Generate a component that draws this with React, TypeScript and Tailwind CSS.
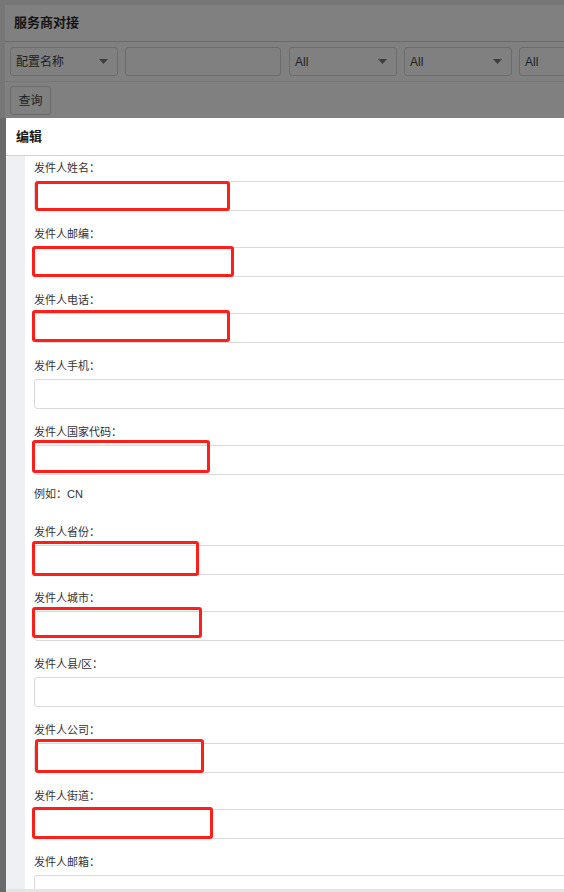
import React from "react";

type Box = { l: number; t: number; w: number; h: number };
type Field = { label: string; box?: Box; hint?: string };

const fields: Field[] = [
  { label: "发件人姓名：", box: { l: 1, t: 0, w: 195, h: 30 } },
  { label: "发件人邮编：", box: { l: -2, t: -1, w: 202, h: 31 } },
  { label: "发件人电话：", box: { l: -2, t: -3, w: 198, h: 32 } },
  { label: "发件人手机：" },
  { label: "发件人国家代码：", box: { l: -2, t: -5, w: 178, h: 33 }, hint: "例如：CN" },
  { label: "发件人省份：", box: { l: -2, t: -4, w: 167, h: 35 } },
  { label: "发件人城市：", box: { l: -2, t: -4, w: 170, h: 31 } },
  { label: "发件人县/区：" },
  { label: "发件人公司：", box: { l: 1, t: -4, w: 169, h: 34 } },
  { label: "发件人街道：", box: { l: -2, t: -2, w: 181, h: 32 } },
  { label: "发件人邮箱：" },
];

function Caret() {
  return (
    <svg width="9" height="5" viewBox="0 0 9 5" className="shrink-0">
      <path d="M0 0 L9 0 L4.5 5 Z" fill="#3e3e3e" />
    </svg>
  );
}

function DimSelect({ text, w, arrow = true }: { text: string; w: string; arrow?: boolean }) {
  return (
    <div
      className={`${w} h-[29px] shrink-0 rounded-[3px] border border-[#6c6c6c] flex items-center justify-between pl-[5px] pr-[9px] text-[12px] text-[#1e1e1e]`}
    >
      <span>{text}</span>
      {arrow && <Caret />}
    </div>
  );
}

export default function App() {
  return (
    <div
      className="relative w-[564px] h-[892px] overflow-hidden bg-[#777777]"
      style={{ fontFamily: '"Liberation Sans", "Noto Sans CJK SC", sans-serif' }}
    >
      {/* underlying dimmed page */}
      <div className="pt-[5px] pl-[5px]">
        <div className="bg-[#808080] h-[887px]">
          <div className="h-[37px] flex items-center pl-[9px] border-b border-[#6a6a6a] text-[13px] font-bold text-[#141414]">
            服务商对接
          </div>
          <div className="h-[40px] flex items-center pl-[5px] border-b border-[#767676]">
            <DimSelect text="配置名称" w="w-[108px]" />
            <div className="ml-[7px] w-[156px] h-[29px] shrink-0 rounded-[3px] border border-[#6c6c6c]" />
            <div className="ml-[8px]">
              <DimSelect text="All" w="w-[108px]" />
            </div>
            <div className="ml-[7px]">
              <DimSelect text="All" w="w-[108px]" />
            </div>
            <div className="ml-[7px]">
              <DimSelect text="All" w="w-[108px]" arrow={false} />
            </div>
          </div>
          <div className="pl-[5px] pt-[4px]">
            <div className="w-[41px] h-[29px] rounded-[3px] border border-[#6c6c6c] flex items-center justify-center text-[12px] text-[#1e1e1e]">
              查询
            </div>
          </div>
        </div>
      </div>

      {/* left dark edge next to modal */}
      <div className="absolute left-0 top-[118px] bottom-0 w-[6px] bg-[#6a6a6a]" />

      {/* modal */}
      <div className="absolute top-[118px] left-[6px] right-0 bottom-0 bg-white flex flex-col">
        <div className="h-[38px] shrink-0 flex items-center pl-[10px] border-b border-[#d2d2d2] text-[13px] font-bold text-[#1a1a1a]">
          编辑
        </div>
        <div className="flex flex-1 min-h-0">
          <div className="w-[19px] shrink-0 bg-[#eff0f4]" />
          <div className="flex-1 pl-[9px] pt-[2px] overflow-hidden">
            {fields.map((f, i) => (
              <div key={i} className={f.hint ? "mb-[18px]" : "mb-[13px]"}>
                <div className="h-[20px] leading-[20px] text-[11px] text-[#333333]">{f.label}</div>
                <div className="relative mt-[3px] h-[30px]">
                  <div className="absolute inset-y-0 left-0 right-[-20px] rounded-[3px] border border-[#d9d9d9] bg-white" />
                  {f.box && (
                    <div
                      className="absolute border-[3px] border-[#fc1f1a] rounded-[3px]"
                      style={{ left: f.box.l, top: f.box.t, width: f.box.w, height: f.box.h }}
                    />
                  )}
                </div>
                {f.hint && (
                  <div className="mt-[9px] h-[20px] leading-[20px] text-[11px] text-[#333333]">{f.hint}</div>
                )}
              </div>
            ))}
          </div>
        </div>
        <div className="absolute left-0 right-0 bottom-0 h-[3px] bg-[#e4e4e4]" />
      </div>
    </div>
  );
}
